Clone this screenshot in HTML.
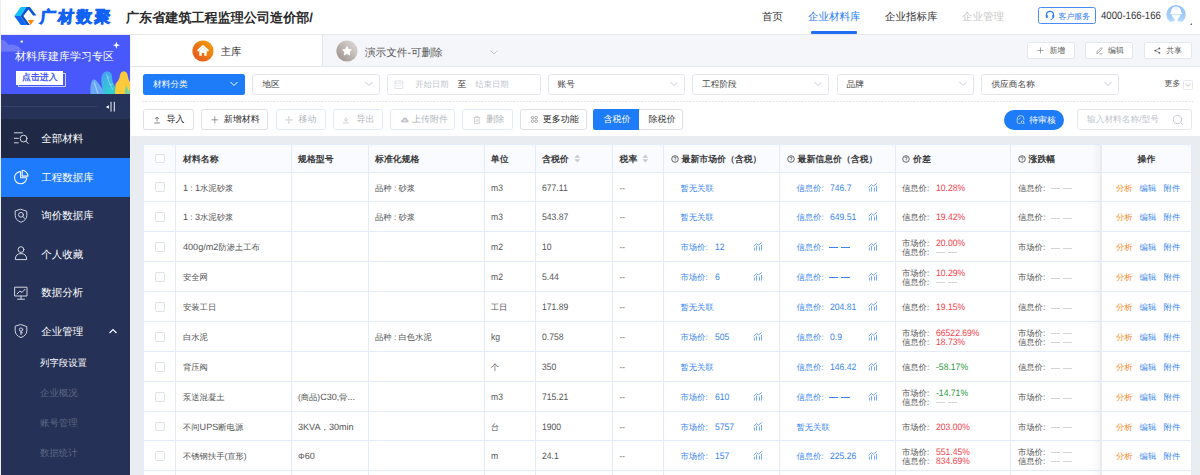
<!DOCTYPE html><html><head><meta charset="utf-8"><style>
*{box-sizing:border-box;margin:0;padding:0}
html,body{width:1200px;height:475px;overflow:hidden;background:#fff;font-family:"Liberation Sans", sans-serif;text-rendering:geometricPrecision;}
.a{position:absolute}
.hdr{left:0;top:0;width:1200px;height:35px;background:#fff;border-bottom:1px solid #e6e8eb}
.side{left:1px;top:35px;width:129px;height:440px;background:#253156}
.edge{left:0;top:0;width:1px;height:475px;background:#eef0f2}
.txt{white-space:nowrap;line-height:1}
</style></head><body><div class="a edge"></div>
<div class="a hdr"></div>
<svg class="a" style="left:0;top:0" width="40" height="34" viewBox="0 0 40 34">
<polygon points="14.26,16.07 20.8,7 26.5,7 20.5,16.07" fill="#13c2f7"/>
<polygon points="26.5,7 29.9,7 36.4,15.5 33,15.5 28.5,9.5 23.35,16.07 20.5,16.07" fill="#0a56d8"/>
<polygon points="14.26,16.07 20.5,16.07 27,24.9 20.8,24.9" fill="#1268f5"/>
<polygon points="20.5,16.07 23.35,16.07 29.9,24.9 27,24.9" fill="#0a4cc8"/>
<polygon points="27.9,20.05 34.1,20.05 30.7,24.9" fill="#ff8a00"/>
</svg>
<div class="a txt" style="left:39.8px;top:9.6px;font-size:15.6px;font-weight:bold;color:#1262f5;transform:skewX(-5deg);letter-spacing:2.6px;-webkit-text-stroke:0.9px #1262f5">广材数聚</div>
<div class="a txt" style="left:126px;top:10.5px;font-size:13.1px;font-weight:bold;color:#2b2b2b">广东省建筑工程监理公司造价部/</div>
<div class="a txt" style="left:762px;top:11.9px;font-size:10.5px;color:#333">首页</div>
<div class="a txt" style="left:808px;top:11.9px;font-size:10.5px;color:#2a7cf6">企业材料库</div>
<div class="a" style="left:811px;top:31px;width:46px;height:3px;background:#1f6ff2;border-radius:1px"></div>
<div class="a txt" style="left:885px;top:11.9px;font-size:10.5px;color:#333">企业指标库</div>
<div class="a txt" style="left:962px;top:11.9px;font-size:10.5px;color:#c8c8c8">企业管理</div>
<div class="a" style="left:1038px;top:7px;width:58px;height:16.5px;border:1px solid #4a8cf6;border-radius:2.5px"></div>
<svg class="a" style="left:1045px;top:10px" width="10" height="11" viewBox="0 0 10 11"><path d="M1.5 6 V4.8 A3.5 3.5 0 0 1 8.5 4.8 V6" fill="none" stroke="#2f7cf6" stroke-width="1.3"/><rect x="0.8" y="5" width="2" height="3" rx="0.8" fill="#2f7cf6"/><rect x="7.2" y="5" width="2" height="3" rx="0.8" fill="#2f7cf6"/><path d="M8.2 8 Q7.5 9.5 5.5 9.5" fill="none" stroke="#2f7cf6" stroke-width="1"/></svg>
<div class="a txt" style="left:1058.5px;top:12.6px;font-size:7.9px;color:#2f7cf6">客户服务</div>
<div class="a txt" style="left:1101px;top:11px;font-size:10.7px;color:#333;transform:scaleX(0.9);transform-origin:0 0">4000-166-166</div>
<svg class="a" style="left:1162px;top:2px" width="34" height="28" viewBox="0 0 34 28">
<defs><linearGradient id="av" x1="0" y1="0" x2="0" y2="1"><stop offset="0" stop-color="#93c2f6"/><stop offset="0.7" stop-color="#a9d0f8"/><stop offset="1" stop-color="#e6f1fd"/></linearGradient></defs>
<circle cx="14.1" cy="12.7" r="9.7" fill="url(#av)"/>
<path d="M8.9 11.2 Q9 4.6 14.1 4.6 Q19.2 4.6 19.3 11.2 Z" fill="#fff"/>
<rect x="8" y="10.7" width="12.2" height="1.3" rx="0.5" fill="#fff"/>
<path d="M13.2 5.2 V7.6 M15 5.2 V7.6" stroke="#c4def9" stroke-width="0.7"/>
<path d="M9.6 12.6 Q10.2 15.6 12.6 17.4 Q12.9 18.6 12.4 19.2 Q9.5 19.6 7.2 20.3 Q10 22.6 14.1 22.6 Q18.2 22.6 21 20.3 Q18.7 19.6 15.8 19.2 Q15.3 18.6 15.6 17.4 Q18 15.6 18.6 12.6 Z" fill="#fff" opacity="0.95"/>
</svg>
<div class="a" style="left:1190px;top:23px;width:0;height:0;border-left:2px solid transparent;border-bottom:2px solid #666"></div>
<div class="a side"></div>
<svg class="a" style="left:1px;top:35px" width="129" height="59" viewBox="0 0 129 59">
<defs><linearGradient id="lf" x1="0" y1="0" x2="0.4" y2="1"><stop offset="0" stop-color="#4c9af7"/><stop offset="1" stop-color="#2fd0cf"/></linearGradient></defs>
<rect width="129" height="59" fill="#4858fb"/>
<path d="M0 4.4 Q5 5 7.2 9.7 Q17 8 21.7 16.4 L0 16.4 Z" fill="#6f79f7"/>
<circle cx="20.8" cy="6.6" r="1.2" fill="#fff"/>
<path d="M115.4 6.5 L116.3 9.3 L119 10.2 L116.3 11.1 L115.4 13.9 L114.5 11.1 L111.8 10.2 L114.5 9.3 Z" fill="#fff"/>
<path d="M89.5 59 C89 52 90 45.5 92.6 44.6 C95.5 44 98 50 104 56.5 L104.5 59 Z" fill="#6aa9f9"/>
<path d="M93.3 47.5 L96.8 58.5" stroke="#e8f2ff" stroke-width="0.6"/>
<path d="M103 59 C101.5 52 99 46 101 40.5 C103 35 109.5 35 110.7 40 C111.7 45 110.5 49 117 54 L118.5 59 Z" fill="url(#lf)"/>
<path d="M105.5 39 L108 47 L112 55 M106 43 L108.5 42 M108.5 49.5 L112 49" stroke="#bfe8f7" stroke-width="0.5" fill="none"/>
<path d="M114 59 L114.5 49 C117 46.5 118.5 44 119 40 C119.8 35.5 125.5 34.5 126.6 40 C127.3 43.5 128 46 129 47 L129 59 Z" fill="#fcc93a"/>
<path d="M124 59 Q123.5 53 125.5 51 Q127.5 54 126.5 59 Z M127 59 Q127.5 55 129 54 L129 59 Z" fill="#66d6a6"/>
</svg>
<div class="a txt" style="left:15px;top:51.8px;font-size:11px;font-weight:500;color:#fff">材料库建库学习专区</div>
<div class="a" style="left:18px;top:72.5px;width:48px;height:14px;border:1px solid #c9cdfb"></div>
<div class="a" style="left:15.5px;top:70.5px;width:47.5px;height:14px;background:#fff"></div>
<div class="a txt" style="left:22px;top:73.3px;font-size:8.9px;font-weight:bold;color:#4a58f6">点击进入</div>
<div class="a" style="left:1px;top:94px;width:129px;height:25px;background:#263258"></div>
<div class="a" style="left:1px;top:106px;width:96px;height:1px;background:#35416a"></div>
<svg class="a" style="left:105px;top:101px" width="12" height="12" viewBox="0 0 12 12"><path d="M0.9 6 L3.9 4.2 V7.8 Z" fill="#fff"/><rect x="5.5" y="0.8" width="1" height="9.8" fill="#eef0f5"/><rect x="8.8" y="0.8" width="1" height="9.8" fill="#eef0f5"/></svg>
<div class="a" style="left:1px;top:119px;width:129px;height:39px;background:#1f2945"></div>
<div class="a" style="left:1px;top:158px;width:129px;height:38.5px;background:#1e7bfc"></div>
<div class="a txt" style="left:41.3px;top:134.0px;font-size:10.5px;color:#fff">全部材料</div>
<div class="a txt" style="left:41.3px;top:172.70000000000002px;font-size:10.5px;color:#fff">工程数据库</div>
<div class="a txt" style="left:41.3px;top:211.4px;font-size:10.5px;color:#fff">询价数据库</div>
<div class="a txt" style="left:41.3px;top:250.20000000000002px;font-size:10.5px;color:#fff">个人收藏</div>
<div class="a txt" style="left:41.3px;top:287.9px;font-size:10.5px;color:#fff">数据分析</div>
<div class="a txt" style="left:41.3px;top:326.7px;font-size:10.5px;color:#fff">企业管理</div>
<svg class="a" style="left:0;top:0" width="40" height="350" viewBox="0 0 40 350" fill="none" stroke="#d3d6de" stroke-width="1" stroke-linecap="round" stroke-linejoin="round">
<path d="M14.3 132.8 H22.3 M14.3 138.3 H18.3 M14.3 142.8 H18.3"/><circle cx="23.6" cy="138.6" r="3.4"/><path d="M26 141.2 L28.2 143.6"/>
<path d="M20.6 171.6 A6.1 6.1 0 1 0 26.7 177.7 H20.6 Z" stroke="#f2f6ff" stroke-width="1.1"/><path d="M22.2 170.3 A6 6 0 0 1 28 176.1 H22.2 Z" stroke="#f2f6ff" stroke-width="1.1"/>
<path d="M21 209.3 L26.8 211.3 V215.5 Q26.8 220 21 222.3 Q15.2 220 15.2 215.5 V211.3 Z"/><circle cx="21" cy="214.8" r="2.4"/><path d="M22.8 216.6 L24.6 218.2"/>
<circle cx="21" cy="249.6" r="2.9"/><path d="M15.3 259.2 Q15.3 253.6 21 253.6 Q26.7 253.6 26.7 259.2 Z"/>
<path d="M15 287.2 H27 V296 H15 Z"/><path d="M21 296 V299 M17.5 299.2 H24.5"/><path d="M17 294 L20 291 L22 292.5 L25 289.3"/>
<path d="M21 324.6 L26.8 326.6 V330.8 Q26.8 335.3 21 337.6 Q15.2 335.3 15.2 330.8 V326.6 Z"/><circle cx="21" cy="329.6" r="1.7"/><path d="M21 331.3 V334.5 M21 332.8 H22.3"/>
</svg>
<svg class="a" style="left:108px;top:327px" width="10" height="8" viewBox="0 0 10 8"><path d="M1.5 6 L5 2.5 L8.5 6" fill="none" stroke="#fff" stroke-width="1.1"/></svg>
<div class="a txt" style="left:40px;top:358px;font-size:9.4px;color:#fff">列字段设置</div>
<div class="a txt" style="left:40px;top:388px;font-size:9.4px;color:#5d6784">企业概况</div>
<div class="a txt" style="left:40px;top:418px;font-size:9.4px;color:#5d6784">账号管理</div>
<div class="a txt" style="left:40px;top:448px;font-size:9.4px;color:#5d6784">数据统计</div>
<div class="a" style="left:130px;top:35px;width:1070px;height:32px;background:#f4f6f9;border-bottom:1px solid #e3e6ea"></div>
<div class="a" style="left:130px;top:35px;width:192.5px;height:31px;background:#fff;border-right:1px solid #e3e6ea"></div>
<svg class="a" style="left:192px;top:40px" width="22" height="22" viewBox="0 0 22 22">
<defs><linearGradient id="hg" x1="1" y1="0" x2="0" y2="1"><stop offset="0" stop-color="#f5a208"/><stop offset="1" stop-color="#e44f20"/></linearGradient></defs>
<circle cx="11" cy="11" r="10.6" fill="url(#hg)"/>
<path d="M5.5 11 L11 6 L16.5 11" fill="none" stroke="#fff" stroke-width="1.8" stroke-linejoin="round"/>
<path d="M7.3 10.5 V15.8 H9.8 V13 H12.2 V15.8 H14.7 V10.5 L11 7.3 Z" fill="#fff"/></svg>
<div class="a txt" style="left:220.8px;top:47.8px;font-size:10.3px;color:#333">主库</div>
<svg class="a" style="left:336px;top:40px" width="22" height="22" viewBox="0 0 22 22">
<defs><linearGradient id="sg" x1="0.9" y1="0.1" x2="0.1" y2="0.9"><stop offset="0" stop-color="#dcd7d4"/><stop offset="1" stop-color="#a0958f"/></linearGradient></defs>
<circle cx="11" cy="11" r="10.6" fill="url(#sg)"/>
<path d="M11 6.6 L12.4 9.4 L15.4 9.8 L13.2 11.9 L13.8 15 L11 13.5 L8.2 15 L8.8 11.9 L6.6 9.8 L9.6 9.4 Z" fill="#fff" stroke="#fff" stroke-width="0.9" stroke-linejoin="round"/></svg>
<div class="a txt" style="left:365px;top:47.8px;font-size:10.6px;color:#555">演示文件-可删除</div>
<svg class="a" style="left:489px;top:49px" width="10" height="7" viewBox="0 0 10 7"><path d="M1.5 1.5 L5 5 L8.5 1.5" fill="none" stroke="#c0c4cc" stroke-width="1"/></svg>
<div class="a" style="left:1026.75px;top:41.5px;width:48.5px;height:17.7px;background:#fff;border:1px solid #e4e7ed;border-radius:2px"></div>
<div class="a txt" style="left:1049.45px;top:47px;font-size:7.9px;color:#555">新增</div>
<div class="a" style="left:1085.4px;top:41.5px;width:48px;height:17.7px;background:#fff;border:1px solid #e4e7ed;border-radius:2px"></div>
<div class="a txt" style="left:1108.1000000000001px;top:47px;font-size:7.9px;color:#555">编辑</div>
<div class="a" style="left:1143.5px;top:41.5px;width:48.3px;height:17.7px;background:#fff;border:1px solid #e4e7ed;border-radius:2px"></div>
<div class="a txt" style="left:1166.2px;top:47px;font-size:7.9px;color:#555">共享</div>
<svg class="a" style="left:1036px;top:46px" width="9" height="9" viewBox="0 0 9 9"><path d="M4.5 1.5 V7.5 M1.5 4.5 H7.5" stroke="#777" stroke-width="0.65"/></svg>
<svg class="a" style="left:1095px;top:46px" width="9" height="9" viewBox="0 0 9 9"><path d="M1.8 7.6 L2.1 5.6 L5.6 2 Q6.3 1.4 6.9 2 Q7.4 2.6 6.8 3.2 L3.3 6.8 Z M4.3 7.8 H7.6" fill="none" stroke="#777" stroke-width="0.6"/></svg>
<svg class="a" style="left:1153px;top:46px" width="9" height="9" viewBox="0 0 9 9"><circle cx="2.2" cy="4.6" r="0.9" fill="#555"/><circle cx="6.4" cy="2.4" r="0.85" fill="#555"/><circle cx="6.4" cy="6.8" r="0.85" fill="#555"/><path d="M2.2 4.6 L6.4 2.4 M2.2 4.6 L6.4 6.8" stroke="#555" stroke-width="0.6"/></svg>
<div class="a" style="left:143px;top:74px;width:102px;height:20.5px;background:#1f7cf8;border-radius:2.5px"></div>
<div class="a txt" style="left:153px;top:79.8px;font-size:8.7px;color:#fff">材料分类</div>
<svg class="a" style="left:229px;top:80px" width="10" height="8" viewBox="0 0 10 8"><path d="M1.5 2 L5 5.5 L8.5 2" fill="none" stroke="#fff" stroke-width="1"/></svg>
<div class="a" style="left:252.3px;top:74px;width:127.69999999999999px;height:20.5px;background:#fff;border:1px solid #e4e7ed;border-radius:2.5px"></div>
<div class="a txt" style="left:262.3px;top:79.8px;font-size:8.7px;color:#444">地区</div>
<svg class="a" style="left:364px;top:80px" width="10" height="8" viewBox="0 0 10 8"><path d="M1.5 2 L5 5.5 L8.5 2" fill="none" stroke="#c0c4cc" stroke-width="0.9"/></svg>
<div class="a" style="left:386.7px;top:74px;width:154.09999999999997px;height:20.5px;background:#fff;border:1px solid #e4e7ed;border-radius:2.5px"></div>
<div class="a" style="left:547.5px;top:74px;width:137.79999999999995px;height:20.5px;background:#fff;border:1px solid #e4e7ed;border-radius:2.5px"></div>
<div class="a txt" style="left:557.5px;top:79.8px;font-size:8.7px;color:#444">账号</div>
<svg class="a" style="left:669.3px;top:80px" width="10" height="8" viewBox="0 0 10 8"><path d="M1.5 2 L5 5.5 L8.5 2" fill="none" stroke="#c0c4cc" stroke-width="0.9"/></svg>
<div class="a" style="left:692px;top:74px;width:137.29999999999995px;height:20.5px;background:#fff;border:1px solid #e4e7ed;border-radius:2.5px"></div>
<div class="a txt" style="left:702px;top:79.8px;font-size:8.7px;color:#444">工程阶段</div>
<svg class="a" style="left:813.3px;top:80px" width="10" height="8" viewBox="0 0 10 8"><path d="M1.5 2 L5 5.5 L8.5 2" fill="none" stroke="#c0c4cc" stroke-width="0.9"/></svg>
<div class="a" style="left:836.5px;top:74px;width:137.5px;height:20.5px;background:#fff;border:1px solid #e4e7ed;border-radius:2.5px"></div>
<div class="a txt" style="left:846.5px;top:79.8px;font-size:8.7px;color:#444">品牌</div>
<svg class="a" style="left:958px;top:80px" width="10" height="8" viewBox="0 0 10 8"><path d="M1.5 2 L5 5.5 L8.5 2" fill="none" stroke="#c0c4cc" stroke-width="0.9"/></svg>
<div class="a" style="left:981.4px;top:74px;width:137.19999999999993px;height:20.5px;background:#fff;border:1px solid #e4e7ed;border-radius:2.5px"></div>
<div class="a txt" style="left:991.4px;top:79.8px;font-size:8.7px;color:#444">供应商名称</div>
<svg class="a" style="left:1102.6px;top:80px" width="10" height="8" viewBox="0 0 10 8"><path d="M1.5 2 L5 5.5 L8.5 2" fill="none" stroke="#c0c4cc" stroke-width="0.9"/></svg>
<svg class="a" style="left:393.5px;top:79.5px" width="10" height="10" viewBox="0 0 10 10" fill="none" stroke="#cfd2d8" stroke-width="0.65"><rect x="1" y="0.9" width="7.8" height="7.6" rx="0.4"/><path d="M1 3.1 H8.8"/><path d="M2.8 5.6 H3.6 M4.6 5.6 H5.4 M6.3 5.6 H7.1" stroke-width="0.8"/></svg>
<div class="a txt" style="left:415.3px;top:80.1px;font-size:8.3px;color:#c0c4cc">开始日期</div>
<div class="a txt" style="left:457.5px;top:79.8px;font-size:8.7px;color:#333">至</div>
<div class="a txt" style="left:475.3px;top:80.1px;font-size:8.3px;color:#c0c4cc">结束日期</div>
<div class="a txt" style="left:1164.6px;top:79.6px;font-size:7.9px;color:#555">更多</div>
<svg class="a" style="left:1183px;top:79.5px" width="10" height="10" viewBox="0 0 10 10"><rect x="0.5" y="0.5" width="9" height="9" rx="1" fill="none" stroke="#e3e6ec" stroke-width="0.9"/><path d="M2.3 3.8 L5 6.2 L7.7 3.8" fill="none" stroke="#b9a89a" stroke-width="0.7"/></svg>
<div class="a" style="left:142px;top:101px;width:1051px;height:1px;background:repeating-linear-gradient(to right,#e3e5e9 0,#e3e5e9 2px,transparent 2px,transparent 3.2px)"></div>
<div class="a" style="left:142.5px;top:108.5px;width:51.19999999999999px;height:21.5px;background:#fff;border:1px solid #dcdfe6;border-radius:2.5px"></div>
<div class="a txt" style="left:166.5px;top:115.2px;font-size:9px;color:#2a2a2a;">导入</div>
<div class="a" style="left:200.6px;top:108.5px;width:67.70000000000002px;height:21.5px;background:#fff;border:1px solid #dcdfe6;border-radius:2.5px"></div>
<div class="a txt" style="left:223.8px;top:115.2px;font-size:9px;color:#2a2a2a;">新增材料</div>
<div class="a" style="left:275.5px;top:108.5px;width:50.69999999999999px;height:21.5px;background:#fff;border:1px solid #e3ebfa;border-radius:2.5px"></div>
<div class="a txt" style="left:298.5px;top:115.2px;font-size:9px;color:#b3b6bd;">移动</div>
<div class="a" style="left:332.9px;top:108.5px;width:50.60000000000002px;height:21.5px;background:#fff;border:1px solid #e3ebfa;border-radius:2.5px"></div>
<div class="a txt" style="left:356.4px;top:115.2px;font-size:9px;color:#b3b6bd;">导出</div>
<div class="a" style="left:390.2px;top:108.5px;width:65.30000000000001px;height:21.5px;background:#fff;border:1px solid #e3ebfa;border-radius:2.5px"></div>
<div class="a txt" style="left:412px;top:115.2px;font-size:9px;color:#b3b6bd;">上传附件</div>
<div class="a" style="left:462px;top:108.5px;width:50.799999999999955px;height:21.5px;background:#fff;border:1px solid #e3ebfa;border-radius:2.5px"></div>
<div class="a txt" style="left:486.2px;top:115.2px;font-size:9px;color:#b3b6bd;">删除</div>
<div class="a" style="left:520px;top:108.5px;width:66.70000000000005px;height:21.5px;background:#fff;border:1px solid #dcdfe6;border-radius:2.5px"></div>
<div class="a txt" style="left:542.8px;top:115.2px;font-size:9px;color:#2a2a2a;">更多功能</div>
<svg class="a" style="left:152px;top:114.5px" width="10" height="10" viewBox="0 0 10 10" fill="none" stroke="#666" stroke-width="0.8"><path d="M5 2.2 V6.5 M3 4 L5 2 L7 4 M2.2 8 H7.8"/></svg>
<svg class="a" style="left:210px;top:114.5px" width="10" height="10" viewBox="0 0 10 10" fill="none" stroke="#777" stroke-width="0.75"><path d="M4.8 1.5 V8.2 M1.4 4.8 H8.2"/></svg>
<svg class="a" style="left:284px;top:114.5px" width="10" height="10" viewBox="0 0 10 10" fill="none" stroke="#c0c3c9" stroke-width="0.7"><path d="M5 1.5 V8.3 M1.6 4.9 H8.4 M4.2 2.3 L5 1.5 L5.8 2.3 M4.2 7.5 L5 8.3 L5.8 7.5 M2.4 4.1 L1.6 4.9 L2.4 5.7 M7.6 4.1 L8.4 4.9 L7.6 5.7"/></svg>
<svg class="a" style="left:341px;top:114.5px" width="10" height="10" viewBox="0 0 10 10" fill="none" stroke="#c0c3c9" stroke-width="0.75"><path d="M5 2 V6.3 M3 4.4 L5 6.3 L7 4.4 M2.2 8 H7.8"/></svg>
<svg class="a" style="left:400px;top:115px" width="10" height="10" viewBox="0 0 10 10"><path d="M2.8 7.6 Q0.8 7.6 1 5.9 Q1.2 4.6 2.6 4.7 Q3 2.4 5 2.5 Q7.2 2.6 7.3 4.6 Q8.7 4.8 8.6 6.2 Q8.4 7.6 7.2 7.6 Z" fill="#c0c3c9"/><path d="M4.8 7.2 V4.8 M3.9 5.6 L4.8 4.7 L5.7 5.6" stroke="#fff" stroke-width="0.6" fill="none"/></svg>
<svg class="a" style="left:472px;top:114.5px" width="10" height="10" viewBox="0 0 10 10" fill="none" stroke="#c0c3c9" stroke-width="0.7"><path d="M1.6 2.6 H8.2 M3.8 2.6 V1.5 H6 V2.6 M2.5 2.6 V8.6 H7.3 V2.6 M4.1 4.3 V7 M5.7 4.3 V7"/></svg>
<svg class="a" style="left:529.5px;top:115px" width="9" height="9" viewBox="0 0 9 9" fill="none" stroke="#777" stroke-width="0.6"><circle cx="2.6" cy="2.6" r="1.3"/><circle cx="6.2" cy="2.6" r="1.3"/><circle cx="2.6" cy="6.2" r="1.3"/><circle cx="6.2" cy="6.2" r="1.3"/></svg>
<div class="a" style="left:593.3px;top:108.5px;width:90.2px;height:21.5px;background:#fff;border:1px solid #dcdfe6;border-radius:2.5px"></div>
<div class="a" style="left:593.3px;top:108.5px;width:45.4px;height:21.5px;background:#1f7cf8;border-radius:2.5px 0 0 2.5px"></div>
<div class="a txt" style="left:603.5px;top:115.2px;font-size:9px;color:#fff">含税价</div>
<div class="a txt" style="left:648.5px;top:115.2px;font-size:9px;color:#333">除税价</div>
<div class="a" style="left:1004px;top:109.5px;width:60px;height:20px;background:#1f7cf8;border-radius:10px"></div>
<svg class="a" style="left:1016px;top:115px" width="10" height="10" viewBox="0 0 10 10" fill="none" stroke="#d6e4fe" stroke-width="0.75"><path d="M4.5 8.4 H2.6 Q1.2 8.4 1.2 7 V4 Q1.2 0.6 4.6 0.6 Q8 0.6 8 4 V5"/><path d="M2.4 4.4 L4.6 3.2"/><circle cx="6.6" cy="7.1" r="1.3"/><path d="M7.6 8.1 L8.6 9.1"/></svg>
<div class="a txt" style="left:1029.3px;top:115.6px;font-size:8.8px;font-weight:500;color:#fff">待审核</div>
<div class="a" style="left:1076.6px;top:109px;width:115.5px;height:20.5px;background:#fff;border:1px solid #e4e7ed;border-radius:2.5px"></div>
<div class="a txt" style="left:1087px;top:115.3px;font-size:8.7px;color:#c0c4cc">输入材料名称/型号</div>
<svg class="a" style="left:1172px;top:114px" width="12" height="12" viewBox="0 0 12 12" fill="none" stroke="#c0c4cc" stroke-width="0.9"><circle cx="5.5" cy="5.5" r="4.2"/><path d="M8.5 8.5 L10.8 10.8"/></svg>
<div class="a" style="left:130px;top:136px;width:1070px;height:339px;background:#e9ecf0"></div>
<div class="a" style="left:143px;top:144px;width:1049.5px;height:331px;background:#fff"></div>
<div class="a" style="left:143px;top:144px;width:1049.5px;height:27.80000000000001px;background:#f9fbff"></div>
<div class="a" style="left:143px;top:144px;width:1049.5px;height:1px;background:#e4ecfb"></div>
<div class="a" style="left:143px;top:172px;width:1049.5px;height:1px;background:#e4ecfb"></div>
<div class="a" style="left:143px;top:201px;width:1049.5px;height:1px;background:#e4ecfb"></div>
<div class="a" style="left:143px;top:231px;width:1049.5px;height:1px;background:#e4ecfb"></div>
<div class="a" style="left:143px;top:261px;width:1049.5px;height:1px;background:#e4ecfb"></div>
<div class="a" style="left:143px;top:291px;width:1049.5px;height:1px;background:#e4ecfb"></div>
<div class="a" style="left:143px;top:321px;width:1049.5px;height:1px;background:#e4ecfb"></div>
<div class="a" style="left:143px;top:351px;width:1049.5px;height:1px;background:#e4ecfb"></div>
<div class="a" style="left:143px;top:381px;width:1049.5px;height:1px;background:#e4ecfb"></div>
<div class="a" style="left:143px;top:411px;width:1049.5px;height:1px;background:#e4ecfb"></div>
<div class="a" style="left:143px;top:440px;width:1049.5px;height:1px;background:#e4ecfb"></div>
<div class="a" style="left:143px;top:470px;width:1049.5px;height:1px;background:#e4ecfb"></div>
<div class="a" style="left:142.5px;top:144px;width:1px;height:331px;background:#e4ecfb"></div>
<div class="a" style="left:174.8px;top:144px;width:1px;height:331px;background:#e4ecfb"></div>
<div class="a" style="left:291.25px;top:144px;width:1px;height:331px;background:#e4ecfb"></div>
<div class="a" style="left:368.25px;top:144px;width:1px;height:331px;background:#e4ecfb"></div>
<div class="a" style="left:484.0px;top:144px;width:1px;height:331px;background:#e4ecfb"></div>
<div class="a" style="left:535.0px;top:144px;width:1px;height:331px;background:#e4ecfb"></div>
<div class="a" style="left:612.0px;top:144px;width:1px;height:331px;background:#e4ecfb"></div>
<div class="a" style="left:663.25px;top:144px;width:1px;height:331px;background:#e4ecfb"></div>
<div class="a" style="left:779.0px;top:144px;width:1px;height:331px;background:#e4ecfb"></div>
<div class="a" style="left:894.7px;top:144px;width:1px;height:331px;background:#e4ecfb"></div>
<div class="a" style="left:1010.2px;top:144px;width:1px;height:331px;background:#e4ecfb"></div>
<div class="a" style="left:1191.0px;top:144px;width:1px;height:331px;background:#e4ecfb"></div>
<div class="a" style="left:1092.3px;top:144px;width:8px;height:331px;background:linear-gradient(to right,rgba(0,0,0,0),rgba(0,0,0,0.035))"></div>
<div class="a" style="left:1100.0px;top:144.5px;width:1.6px;height:331px;background:#eaebee"></div>
<div class="a" style="left:155px;top:153.6px;width:9.7px;height:9.7px;border:1px solid #dfe2e7;border-radius:2px;background:#fff"></div>
<div class="a txt" style="left:183px;top:154.75px;font-size:8.9px;color:#3a3a3a;font-weight:bold;">材料名称</div>
<div class="a txt" style="left:298px;top:154.75px;font-size:8.9px;color:#3a3a3a;font-weight:bold;">规格型号</div>
<div class="a txt" style="left:375px;top:154.75px;font-size:8.9px;color:#3a3a3a;font-weight:bold;">标准化规格</div>
<div class="a txt" style="left:490.8px;top:154.75px;font-size:8.9px;color:#3a3a3a;font-weight:bold;">单位</div>
<div class="a txt" style="left:542px;top:154.75px;font-size:8.9px;color:#3a3a3a;font-weight:bold;">含税价</div>
<svg class="a" style="left:573.8px;top:154.10000000000002px" width="7" height="9" viewBox="0 0 7 9"><path d="M0.2 3.7 L3.3 0.4 L6.4 3.7 Z M0.2 5.2 L3.3 8.5 L6.4 5.2 Z" fill="#c8cbd1"/></svg>
<div class="a txt" style="left:619.5px;top:154.75px;font-size:8.9px;color:#3a3a3a;font-weight:bold;">税率</div>
<svg class="a" style="left:642px;top:154.10000000000002px" width="7" height="9" viewBox="0 0 7 9"><path d="M0.2 3.7 L3.3 0.4 L6.4 3.7 Z M0.2 5.2 L3.3 8.5 L6.4 5.2 Z" fill="#c8cbd1"/></svg>
<svg class="a" style="left:670.5px;top:155.3px" width="8" height="8" viewBox="0 0 8 8"><circle cx="4" cy="4" r="3.3" fill="none" stroke="#444" stroke-width="0.8"/><path d="M2.9 3.1 Q2.9 2 4 2 Q5.1 2 5.1 3 Q5.1 3.7 4.1 4.2 V4.9" fill="none" stroke="#444" stroke-width="0.7"/><circle cx="4.05" cy="5.9" r="0.45" fill="#444"/></svg>
<div class="a txt" style="left:681.5px;top:154.75px;font-size:8.9px;color:#3a3a3a;font-weight:bold;">最新市场价（含税）</div>
<svg class="a" style="left:786.5px;top:155.3px" width="8" height="8" viewBox="0 0 8 8"><circle cx="4" cy="4" r="3.3" fill="none" stroke="#444" stroke-width="0.8"/><path d="M2.9 3.1 Q2.9 2 4 2 Q5.1 2 5.1 3 Q5.1 3.7 4.1 4.2 V4.9" fill="none" stroke="#444" stroke-width="0.7"/><circle cx="4.05" cy="5.9" r="0.45" fill="#444"/></svg>
<div class="a txt" style="left:797.5px;top:154.75px;font-size:8.9px;color:#3a3a3a;font-weight:bold;">最新信息价（含税）</div>
<svg class="a" style="left:902px;top:155.3px" width="8" height="8" viewBox="0 0 8 8"><circle cx="4" cy="4" r="3.3" fill="none" stroke="#444" stroke-width="0.8"/><path d="M2.9 3.1 Q2.9 2 4 2 Q5.1 2 5.1 3 Q5.1 3.7 4.1 4.2 V4.9" fill="none" stroke="#444" stroke-width="0.7"/><circle cx="4.05" cy="5.9" r="0.45" fill="#444"/></svg>
<div class="a txt" style="left:913px;top:154.75px;font-size:8.9px;color:#3a3a3a;font-weight:bold;">价差</div>
<svg class="a" style="left:1017.5px;top:155.3px" width="8" height="8" viewBox="0 0 8 8"><circle cx="4" cy="4" r="3.3" fill="none" stroke="#444" stroke-width="0.8"/><path d="M2.9 3.1 Q2.9 2 4 2 Q5.1 2 5.1 3 Q5.1 3.7 4.1 4.2 V4.9" fill="none" stroke="#444" stroke-width="0.7"/><circle cx="4.05" cy="5.9" r="0.45" fill="#444"/></svg>
<div class="a txt" style="left:1028.5px;top:154.75px;font-size:8.9px;color:#3a3a3a;font-weight:bold;">涨跌幅</div>
<div class="a txt" style="left:1137.5px;top:154.75px;font-size:8.9px;color:#3a3a3a;font-weight:bold;">操作</div>
<div class="a" style="left:155px;top:182.2px;width:9.7px;height:9.7px;border:1px solid #dfe2e7;border-radius:2px;background:#fff"></div>
<div class="a txt" style="left:183px;top:183.65px;font-size:8.3px;color:#555;"><span style="font-size:9.1px;line-height:0">1</span> : <span style="font-size:9.1px;line-height:0">1</span>水泥砂浆</div>
<div class="a txt" style="left:375px;top:183.65px;font-size:8.3px;color:#555;">品种 : 砂浆</div>
<div class="a txt" style="left:490.8px;top:183.60px;font-size:9.3px;color:#555;transform:scaleX(0.925);transform-origin:0 0;">m3</div>
<div class="a txt" style="left:542px;top:183.60px;font-size:9.3px;color:#555;transform:scaleX(0.925);transform-origin:0 0;">677.11</div>
<div class="a txt" style="left:619.5px;top:183.65px;font-size:8.3px;color:#555;">--</div>
<div class="a txt" style="left:680.5px;top:183.65px;font-size:8.3px;color:#3a86f0;">暂无关联</div>
<div class="a txt" style="left:796.5px;top:183.65px;font-size:8.3px;color:#3a86f0;">信息价:</div>
<div class="a txt" style="left:829.5px;top:183.60px;font-size:9.3px;color:#3a86f0;transform:scaleX(0.925);transform-origin:0 0;">746.7</div>
<svg class="a" style="left:868px;top:182.5px" width="10" height="9" viewBox="0 0 10 9" fill="none" stroke="#5c9cf3" stroke-width="0.85" stroke-linecap="round" stroke-linejoin="round"><path d="M1.4 5.9 V8.2 M3.5 4.1 V8.2 M6.5 5 V8.2 M8.5 3.2 V8.2"/><path d="M0.9 4.1 L3.5 1.6 L5.4 3.1 L8.5 0.7"/></svg>
<div class="a txt" style="left:902px;top:183.65px;font-size:8.3px;color:#555;">信息价:</div>
<div class="a txt" style="left:935.6px;top:183.60px;font-size:9.3px;color:#f5424a;transform:scaleX(0.925);transform-origin:0 0;">10.28%</div>
<div class="a txt" style="left:1018px;top:183.65px;font-size:8.3px;color:#555;">信息价:</div>
<div class="a" style="left:1051px;top:188.0px;width:9px;height:0.8px;background:#d4d4d4"></div>
<div class="a" style="left:1062.5px;top:188.0px;width:9px;height:0.8px;background:#d4d4d4"></div>
<div class="a txt" style="left:1116px;top:183.65px;font-size:8.3px;color:#f98a25;">分析</div>
<div class="a txt" style="left:1139.6px;top:183.65px;font-size:8.3px;color:#3a86f0;">编辑</div>
<div class="a txt" style="left:1163.6px;top:183.65px;font-size:8.3px;color:#3a86f0;">附件</div>
<div class="a" style="left:155px;top:211.89999999999998px;width:9.7px;height:9.7px;border:1px solid #dfe2e7;border-radius:2px;background:#fff"></div>
<div class="a txt" style="left:183px;top:213.35px;font-size:8.3px;color:#555;"><span style="font-size:9.1px;line-height:0">1</span> : <span style="font-size:9.1px;line-height:0">3</span>水泥砂浆</div>
<div class="a txt" style="left:375px;top:213.35px;font-size:8.3px;color:#555;">品种 : 砂浆</div>
<div class="a txt" style="left:490.8px;top:213.30px;font-size:9.3px;color:#555;transform:scaleX(0.925);transform-origin:0 0;">m3</div>
<div class="a txt" style="left:542px;top:213.30px;font-size:9.3px;color:#555;transform:scaleX(0.925);transform-origin:0 0;">543.87</div>
<div class="a txt" style="left:619.5px;top:213.35px;font-size:8.3px;color:#555;">--</div>
<div class="a txt" style="left:680.5px;top:213.35px;font-size:8.3px;color:#3a86f0;">暂无关联</div>
<div class="a txt" style="left:796.5px;top:213.35px;font-size:8.3px;color:#3a86f0;">信息价:</div>
<div class="a txt" style="left:829.5px;top:213.30px;font-size:9.3px;color:#3a86f0;transform:scaleX(0.925);transform-origin:0 0;">649.51</div>
<svg class="a" style="left:868px;top:212.2px" width="10" height="9" viewBox="0 0 10 9" fill="none" stroke="#5c9cf3" stroke-width="0.85" stroke-linecap="round" stroke-linejoin="round"><path d="M1.4 5.9 V8.2 M3.5 4.1 V8.2 M6.5 5 V8.2 M8.5 3.2 V8.2"/><path d="M0.9 4.1 L3.5 1.6 L5.4 3.1 L8.5 0.7"/></svg>
<div class="a txt" style="left:902px;top:213.35px;font-size:8.3px;color:#555;">信息价:</div>
<div class="a txt" style="left:935.6px;top:213.30px;font-size:9.3px;color:#f5424a;transform:scaleX(0.925);transform-origin:0 0;">19.42%</div>
<div class="a txt" style="left:1018px;top:213.35px;font-size:8.3px;color:#555;">信息价:</div>
<div class="a" style="left:1051px;top:217.7px;width:9px;height:0.8px;background:#d4d4d4"></div>
<div class="a" style="left:1062.5px;top:217.7px;width:9px;height:0.8px;background:#d4d4d4"></div>
<div class="a txt" style="left:1116px;top:213.35px;font-size:8.3px;color:#f98a25;">分析</div>
<div class="a txt" style="left:1139.6px;top:213.35px;font-size:8.3px;color:#3a86f0;">编辑</div>
<div class="a txt" style="left:1163.6px;top:213.35px;font-size:8.3px;color:#3a86f0;">附件</div>
<div class="a" style="left:155px;top:241.89999999999998px;width:9.7px;height:9.7px;border:1px solid #dfe2e7;border-radius:2px;background:#fff"></div>
<div class="a txt" style="left:183px;top:243.35px;font-size:8.3px;color:#555;"><span style="font-size:9.1px;line-height:0">400g/m2</span>防渗土工布</div>
<div class="a txt" style="left:490.8px;top:243.30px;font-size:9.3px;color:#555;transform:scaleX(0.925);transform-origin:0 0;">m2</div>
<div class="a txt" style="left:542px;top:243.30px;font-size:9.3px;color:#555;transform:scaleX(0.925);transform-origin:0 0;">10</div>
<div class="a txt" style="left:619.5px;top:243.35px;font-size:8.3px;color:#555;">--</div>
<div class="a txt" style="left:680.5px;top:243.35px;font-size:8.3px;color:#3a86f0;">市场价:</div>
<div class="a txt" style="left:714.5px;top:243.30px;font-size:9.3px;color:#3a86f0;transform:scaleX(0.925);transform-origin:0 0;">12</div>
<svg class="a" style="left:752.5px;top:242.2px" width="10" height="9" viewBox="0 0 10 9" fill="none" stroke="#5c9cf3" stroke-width="0.85" stroke-linecap="round" stroke-linejoin="round"><path d="M1.4 5.9 V8.2 M3.5 4.1 V8.2 M6.5 5 V8.2 M8.5 3.2 V8.2"/><path d="M0.9 4.1 L3.5 1.6 L5.4 3.1 L8.5 0.7"/></svg>
<div class="a txt" style="left:796.5px;top:243.35px;font-size:8.3px;color:#3a86f0;">信息价:</div>
<div class="a" style="left:829px;top:247.2px;width:9px;height:0.8px;background:#3a86f0"></div>
<div class="a" style="left:841px;top:247.2px;width:9px;height:0.8px;background:#3a86f0"></div>
<svg class="a" style="left:868px;top:242.2px" width="10" height="9" viewBox="0 0 10 9" fill="none" stroke="#5c9cf3" stroke-width="0.85" stroke-linecap="round" stroke-linejoin="round"><path d="M1.4 5.9 V8.2 M3.5 4.1 V8.2 M6.5 5 V8.2 M8.5 3.2 V8.2"/><path d="M0.9 4.1 L3.5 1.6 L5.4 3.1 L8.5 0.7"/></svg>
<div class="a txt" style="left:902px;top:239.05px;font-size:8.3px;color:#555;">市场价:</div>
<div class="a txt" style="left:935.6px;top:239.00px;font-size:9.3px;color:#f5424a;transform:scaleX(0.925);transform-origin:0 0;">20.00%</div>
<div class="a txt" style="left:902px;top:247.85px;font-size:8.3px;color:#555;">信息价:</div>
<div class="a" style="left:935.6px;top:252.2px;width:9px;height:0.8px;background:#d4d4d4"></div>
<div class="a" style="left:947.5px;top:252.2px;width:9px;height:0.8px;background:#d4d4d4"></div>
<div class="a txt" style="left:1018px;top:243.35px;font-size:8.3px;color:#555;">市场价:</div>
<div class="a" style="left:1051px;top:247.7px;width:9px;height:0.8px;background:#d4d4d4"></div>
<div class="a" style="left:1062.5px;top:247.7px;width:9px;height:0.8px;background:#d4d4d4"></div>
<div class="a txt" style="left:1116px;top:243.35px;font-size:8.3px;color:#f98a25;">分析</div>
<div class="a txt" style="left:1139.6px;top:243.35px;font-size:8.3px;color:#3a86f0;">编辑</div>
<div class="a txt" style="left:1163.6px;top:243.35px;font-size:8.3px;color:#3a86f0;">附件</div>
<div class="a" style="left:155px;top:271.9px;width:9.7px;height:9.7px;border:1px solid #dfe2e7;border-radius:2px;background:#fff"></div>
<div class="a txt" style="left:183px;top:273.35px;font-size:8.3px;color:#555;">安全网</div>
<div class="a txt" style="left:490.8px;top:273.30px;font-size:9.3px;color:#555;transform:scaleX(0.925);transform-origin:0 0;">m2</div>
<div class="a txt" style="left:542px;top:273.30px;font-size:9.3px;color:#555;transform:scaleX(0.925);transform-origin:0 0;">5.44</div>
<div class="a txt" style="left:619.5px;top:273.35px;font-size:8.3px;color:#555;">--</div>
<div class="a txt" style="left:680.5px;top:273.35px;font-size:8.3px;color:#3a86f0;">市场价:</div>
<div class="a txt" style="left:714.5px;top:273.30px;font-size:9.3px;color:#3a86f0;transform:scaleX(0.925);transform-origin:0 0;">6</div>
<svg class="a" style="left:752.5px;top:272.2px" width="10" height="9" viewBox="0 0 10 9" fill="none" stroke="#5c9cf3" stroke-width="0.85" stroke-linecap="round" stroke-linejoin="round"><path d="M1.4 5.9 V8.2 M3.5 4.1 V8.2 M6.5 5 V8.2 M8.5 3.2 V8.2"/><path d="M0.9 4.1 L3.5 1.6 L5.4 3.1 L8.5 0.7"/></svg>
<div class="a txt" style="left:796.5px;top:273.35px;font-size:8.3px;color:#3a86f0;">信息价:</div>
<div class="a" style="left:829px;top:277.2px;width:9px;height:0.8px;background:#3a86f0"></div>
<div class="a" style="left:841px;top:277.2px;width:9px;height:0.8px;background:#3a86f0"></div>
<svg class="a" style="left:868px;top:272.2px" width="10" height="9" viewBox="0 0 10 9" fill="none" stroke="#5c9cf3" stroke-width="0.85" stroke-linecap="round" stroke-linejoin="round"><path d="M1.4 5.9 V8.2 M3.5 4.1 V8.2 M6.5 5 V8.2 M8.5 3.2 V8.2"/><path d="M0.9 4.1 L3.5 1.6 L5.4 3.1 L8.5 0.7"/></svg>
<div class="a txt" style="left:902px;top:269.05px;font-size:8.3px;color:#555;">市场价:</div>
<div class="a txt" style="left:935.6px;top:269.00px;font-size:9.3px;color:#f5424a;transform:scaleX(0.925);transform-origin:0 0;">10.29%</div>
<div class="a txt" style="left:902px;top:277.85px;font-size:8.3px;color:#555;">信息价:</div>
<div class="a" style="left:935.6px;top:282.2px;width:9px;height:0.8px;background:#d4d4d4"></div>
<div class="a" style="left:947.5px;top:282.2px;width:9px;height:0.8px;background:#d4d4d4"></div>
<div class="a txt" style="left:1018px;top:273.35px;font-size:8.3px;color:#555;">市场价:</div>
<div class="a" style="left:1051px;top:277.7px;width:9px;height:0.8px;background:#d4d4d4"></div>
<div class="a" style="left:1062.5px;top:277.7px;width:9px;height:0.8px;background:#d4d4d4"></div>
<div class="a txt" style="left:1116px;top:273.35px;font-size:8.3px;color:#f98a25;">分析</div>
<div class="a txt" style="left:1139.6px;top:273.35px;font-size:8.3px;color:#3a86f0;">编辑</div>
<div class="a txt" style="left:1163.6px;top:273.35px;font-size:8.3px;color:#3a86f0;">附件</div>
<div class="a" style="left:155px;top:301.9px;width:9.7px;height:9.7px;border:1px solid #dfe2e7;border-radius:2px;background:#fff"></div>
<div class="a txt" style="left:183px;top:303.35px;font-size:8.3px;color:#555;">安装工日</div>
<div class="a txt" style="left:490.8px;top:303.35px;font-size:8.3px;color:#555;">工日</div>
<div class="a txt" style="left:542px;top:303.30px;font-size:9.3px;color:#555;transform:scaleX(0.925);transform-origin:0 0;">171.89</div>
<div class="a txt" style="left:619.5px;top:303.35px;font-size:8.3px;color:#555;">--</div>
<div class="a txt" style="left:680.5px;top:303.35px;font-size:8.3px;color:#3a86f0;">暂无关联</div>
<div class="a txt" style="left:796.5px;top:303.35px;font-size:8.3px;color:#3a86f0;">信息价:</div>
<div class="a txt" style="left:829.5px;top:303.30px;font-size:9.3px;color:#3a86f0;transform:scaleX(0.925);transform-origin:0 0;">204.81</div>
<svg class="a" style="left:868px;top:302.2px" width="10" height="9" viewBox="0 0 10 9" fill="none" stroke="#5c9cf3" stroke-width="0.85" stroke-linecap="round" stroke-linejoin="round"><path d="M1.4 5.9 V8.2 M3.5 4.1 V8.2 M6.5 5 V8.2 M8.5 3.2 V8.2"/><path d="M0.9 4.1 L3.5 1.6 L5.4 3.1 L8.5 0.7"/></svg>
<div class="a txt" style="left:902px;top:303.35px;font-size:8.3px;color:#555;">信息价:</div>
<div class="a txt" style="left:935.6px;top:303.30px;font-size:9.3px;color:#f5424a;transform:scaleX(0.925);transform-origin:0 0;">19.15%</div>
<div class="a txt" style="left:1018px;top:303.35px;font-size:8.3px;color:#555;">信息价:</div>
<div class="a" style="left:1051px;top:307.7px;width:9px;height:0.8px;background:#d4d4d4"></div>
<div class="a" style="left:1062.5px;top:307.7px;width:9px;height:0.8px;background:#d4d4d4"></div>
<div class="a txt" style="left:1116px;top:303.35px;font-size:8.3px;color:#f98a25;">分析</div>
<div class="a txt" style="left:1139.6px;top:303.35px;font-size:8.3px;color:#3a86f0;">编辑</div>
<div class="a txt" style="left:1163.6px;top:303.35px;font-size:8.3px;color:#3a86f0;">附件</div>
<div class="a" style="left:155px;top:331.9px;width:9.7px;height:9.7px;border:1px solid #dfe2e7;border-radius:2px;background:#fff"></div>
<div class="a txt" style="left:183px;top:333.35px;font-size:8.3px;color:#555;">白水泥</div>
<div class="a txt" style="left:375px;top:333.35px;font-size:8.3px;color:#555;">品种 : 白色水泥</div>
<div class="a txt" style="left:490.8px;top:333.30px;font-size:9.3px;color:#555;transform:scaleX(0.925);transform-origin:0 0;">kg</div>
<div class="a txt" style="left:542px;top:333.30px;font-size:9.3px;color:#555;transform:scaleX(0.925);transform-origin:0 0;">0.758</div>
<div class="a txt" style="left:619.5px;top:333.35px;font-size:8.3px;color:#555;">--</div>
<div class="a txt" style="left:680.5px;top:333.35px;font-size:8.3px;color:#3a86f0;">市场价:</div>
<div class="a txt" style="left:714.5px;top:333.30px;font-size:9.3px;color:#3a86f0;transform:scaleX(0.925);transform-origin:0 0;">505</div>
<svg class="a" style="left:752.5px;top:332.2px" width="10" height="9" viewBox="0 0 10 9" fill="none" stroke="#5c9cf3" stroke-width="0.85" stroke-linecap="round" stroke-linejoin="round"><path d="M1.4 5.9 V8.2 M3.5 4.1 V8.2 M6.5 5 V8.2 M8.5 3.2 V8.2"/><path d="M0.9 4.1 L3.5 1.6 L5.4 3.1 L8.5 0.7"/></svg>
<div class="a txt" style="left:796.5px;top:333.35px;font-size:8.3px;color:#3a86f0;">信息价:</div>
<div class="a txt" style="left:829.5px;top:333.30px;font-size:9.3px;color:#3a86f0;transform:scaleX(0.925);transform-origin:0 0;">0.9</div>
<svg class="a" style="left:868px;top:332.2px" width="10" height="9" viewBox="0 0 10 9" fill="none" stroke="#5c9cf3" stroke-width="0.85" stroke-linecap="round" stroke-linejoin="round"><path d="M1.4 5.9 V8.2 M3.5 4.1 V8.2 M6.5 5 V8.2 M8.5 3.2 V8.2"/><path d="M0.9 4.1 L3.5 1.6 L5.4 3.1 L8.5 0.7"/></svg>
<div class="a txt" style="left:902px;top:329.05px;font-size:8.3px;color:#555;">市场价:</div>
<div class="a txt" style="left:935.6px;top:329.00px;font-size:9.3px;color:#f5424a;transform:scaleX(0.925);transform-origin:0 0;">66522.69%</div>
<div class="a txt" style="left:902px;top:337.85px;font-size:8.3px;color:#555;">信息价:</div>
<div class="a txt" style="left:935.6px;top:337.80px;font-size:9.3px;color:#f5424a;transform:scaleX(0.925);transform-origin:0 0;">18.73%</div>
<div class="a txt" style="left:1018px;top:329.05px;font-size:8.3px;color:#555;">市场价:</div>
<div class="a" style="left:1051px;top:333.4px;width:9px;height:0.8px;background:#d4d4d4"></div>
<div class="a" style="left:1062.5px;top:333.4px;width:9px;height:0.8px;background:#d4d4d4"></div>
<div class="a txt" style="left:1018px;top:337.85px;font-size:8.3px;color:#555;">信息价:</div>
<div class="a" style="left:1051px;top:342.2px;width:9px;height:0.8px;background:#d4d4d4"></div>
<div class="a" style="left:1062.5px;top:342.2px;width:9px;height:0.8px;background:#d4d4d4"></div>
<div class="a txt" style="left:1116px;top:333.35px;font-size:8.3px;color:#f98a25;">分析</div>
<div class="a txt" style="left:1139.6px;top:333.35px;font-size:8.3px;color:#3a86f0;">编辑</div>
<div class="a txt" style="left:1163.6px;top:333.35px;font-size:8.3px;color:#3a86f0;">附件</div>
<div class="a" style="left:155px;top:361.9px;width:9.7px;height:9.7px;border:1px solid #dfe2e7;border-radius:2px;background:#fff"></div>
<div class="a txt" style="left:183px;top:363.35px;font-size:8.3px;color:#555;">背压阀</div>
<div class="a txt" style="left:490.8px;top:363.35px;font-size:8.3px;color:#555;">个</div>
<div class="a txt" style="left:542px;top:363.30px;font-size:9.3px;color:#555;transform:scaleX(0.925);transform-origin:0 0;">350</div>
<div class="a txt" style="left:619.5px;top:363.35px;font-size:8.3px;color:#555;">--</div>
<div class="a txt" style="left:680.5px;top:363.35px;font-size:8.3px;color:#3a86f0;">暂无关联</div>
<div class="a txt" style="left:796.5px;top:363.35px;font-size:8.3px;color:#3a86f0;">信息价:</div>
<div class="a txt" style="left:829.5px;top:363.30px;font-size:9.3px;color:#3a86f0;transform:scaleX(0.925);transform-origin:0 0;">146.42</div>
<svg class="a" style="left:868px;top:362.2px" width="10" height="9" viewBox="0 0 10 9" fill="none" stroke="#5c9cf3" stroke-width="0.85" stroke-linecap="round" stroke-linejoin="round"><path d="M1.4 5.9 V8.2 M3.5 4.1 V8.2 M6.5 5 V8.2 M8.5 3.2 V8.2"/><path d="M0.9 4.1 L3.5 1.6 L5.4 3.1 L8.5 0.7"/></svg>
<div class="a txt" style="left:902px;top:363.35px;font-size:8.3px;color:#555;">信息价:</div>
<div class="a txt" style="left:935.6px;top:363.30px;font-size:9.3px;color:#2a9a3c;transform:scaleX(0.925);transform-origin:0 0;">-58.17%</div>
<div class="a txt" style="left:1018px;top:363.35px;font-size:8.3px;color:#555;">信息价:</div>
<div class="a" style="left:1051px;top:367.7px;width:9px;height:0.8px;background:#d4d4d4"></div>
<div class="a" style="left:1062.5px;top:367.7px;width:9px;height:0.8px;background:#d4d4d4"></div>
<div class="a txt" style="left:1116px;top:363.35px;font-size:8.3px;color:#f98a25;">分析</div>
<div class="a txt" style="left:1139.6px;top:363.35px;font-size:8.3px;color:#3a86f0;">编辑</div>
<div class="a txt" style="left:1163.6px;top:363.35px;font-size:8.3px;color:#3a86f0;">附件</div>
<div class="a" style="left:155px;top:391.9px;width:9.7px;height:9.7px;border:1px solid #dfe2e7;border-radius:2px;background:#fff"></div>
<div class="a txt" style="left:183px;top:393.35px;font-size:8.3px;color:#555;">泵送混凝土</div>
<div class="a txt" style="left:298px;top:393.35px;font-size:8.3px;color:#555;">(商品)<span style="font-size:9.1px;line-height:0">C30</span>,骨<span style="font-size:9.1px;line-height:0">...</span></div>
<div class="a txt" style="left:490.8px;top:393.30px;font-size:9.3px;color:#555;transform:scaleX(0.925);transform-origin:0 0;">m3</div>
<div class="a txt" style="left:542px;top:393.30px;font-size:9.3px;color:#555;transform:scaleX(0.925);transform-origin:0 0;">715.21</div>
<div class="a txt" style="left:619.5px;top:393.35px;font-size:8.3px;color:#555;">--</div>
<div class="a txt" style="left:680.5px;top:393.35px;font-size:8.3px;color:#3a86f0;">市场价:</div>
<div class="a txt" style="left:714.5px;top:393.30px;font-size:9.3px;color:#3a86f0;transform:scaleX(0.925);transform-origin:0 0;">610</div>
<svg class="a" style="left:752.5px;top:392.2px" width="10" height="9" viewBox="0 0 10 9" fill="none" stroke="#5c9cf3" stroke-width="0.85" stroke-linecap="round" stroke-linejoin="round"><path d="M1.4 5.9 V8.2 M3.5 4.1 V8.2 M6.5 5 V8.2 M8.5 3.2 V8.2"/><path d="M0.9 4.1 L3.5 1.6 L5.4 3.1 L8.5 0.7"/></svg>
<div class="a txt" style="left:796.5px;top:393.35px;font-size:8.3px;color:#3a86f0;">信息价:</div>
<div class="a" style="left:829px;top:397.2px;width:9px;height:0.8px;background:#3a86f0"></div>
<div class="a" style="left:841px;top:397.2px;width:9px;height:0.8px;background:#3a86f0"></div>
<svg class="a" style="left:868px;top:392.2px" width="10" height="9" viewBox="0 0 10 9" fill="none" stroke="#5c9cf3" stroke-width="0.85" stroke-linecap="round" stroke-linejoin="round"><path d="M1.4 5.9 V8.2 M3.5 4.1 V8.2 M6.5 5 V8.2 M8.5 3.2 V8.2"/><path d="M0.9 4.1 L3.5 1.6 L5.4 3.1 L8.5 0.7"/></svg>
<div class="a txt" style="left:902px;top:389.05px;font-size:8.3px;color:#555;">市场价:</div>
<div class="a txt" style="left:935.6px;top:389.00px;font-size:9.3px;color:#2a9a3c;transform:scaleX(0.925);transform-origin:0 0;">-14.71%</div>
<div class="a txt" style="left:902px;top:397.85px;font-size:8.3px;color:#555;">信息价:</div>
<div class="a" style="left:935.6px;top:402.2px;width:9px;height:0.8px;background:#d4d4d4"></div>
<div class="a" style="left:947.5px;top:402.2px;width:9px;height:0.8px;background:#d4d4d4"></div>
<div class="a txt" style="left:1018px;top:393.35px;font-size:8.3px;color:#555;">市场价:</div>
<div class="a" style="left:1051px;top:397.7px;width:9px;height:0.8px;background:#d4d4d4"></div>
<div class="a" style="left:1062.5px;top:397.7px;width:9px;height:0.8px;background:#d4d4d4"></div>
<div class="a txt" style="left:1116px;top:393.35px;font-size:8.3px;color:#f98a25;">分析</div>
<div class="a txt" style="left:1139.6px;top:393.35px;font-size:8.3px;color:#3a86f0;">编辑</div>
<div class="a txt" style="left:1163.6px;top:393.35px;font-size:8.3px;color:#3a86f0;">附件</div>
<div class="a" style="left:155px;top:421.55px;width:9.7px;height:9.7px;border:1px solid #dfe2e7;border-radius:2px;background:#fff"></div>
<div class="a txt" style="left:183px;top:423.00px;font-size:8.3px;color:#555;">不间<span style="font-size:9.1px;line-height:0">UPS</span>断电源</div>
<div class="a txt" style="left:298px;top:423.00px;font-size:8.3px;color:#555;"><span style="font-size:9.1px;line-height:0">3KVA</span>，<span style="font-size:9.1px;line-height:0">30min</span></div>
<div class="a txt" style="left:490.8px;top:423.00px;font-size:8.3px;color:#555;">台</div>
<div class="a txt" style="left:542px;top:422.95px;font-size:9.3px;color:#555;transform:scaleX(0.925);transform-origin:0 0;">1900</div>
<div class="a txt" style="left:619.5px;top:423.00px;font-size:8.3px;color:#555;">--</div>
<div class="a txt" style="left:680.5px;top:423.00px;font-size:8.3px;color:#3a86f0;">市场价:</div>
<div class="a txt" style="left:714.5px;top:422.95px;font-size:9.3px;color:#3a86f0;transform:scaleX(0.925);transform-origin:0 0;">5757</div>
<svg class="a" style="left:752.5px;top:421.85px" width="10" height="9" viewBox="0 0 10 9" fill="none" stroke="#5c9cf3" stroke-width="0.85" stroke-linecap="round" stroke-linejoin="round"><path d="M1.4 5.9 V8.2 M3.5 4.1 V8.2 M6.5 5 V8.2 M8.5 3.2 V8.2"/><path d="M0.9 4.1 L3.5 1.6 L5.4 3.1 L8.5 0.7"/></svg>
<div class="a txt" style="left:796.5px;top:423.00px;font-size:8.3px;color:#3a86f0;">暂无关联</div>
<div class="a txt" style="left:902px;top:423.00px;font-size:8.3px;color:#555;">市场价:</div>
<div class="a txt" style="left:935.6px;top:422.95px;font-size:9.3px;color:#f5424a;transform:scaleX(0.925);transform-origin:0 0;">203.00%</div>
<div class="a txt" style="left:1018px;top:423.00px;font-size:8.3px;color:#555;">市场价:</div>
<div class="a" style="left:1051px;top:427.35px;width:9px;height:0.8px;background:#d4d4d4"></div>
<div class="a" style="left:1062.5px;top:427.35px;width:9px;height:0.8px;background:#d4d4d4"></div>
<div class="a txt" style="left:1116px;top:423.00px;font-size:8.3px;color:#f98a25;">分析</div>
<div class="a txt" style="left:1139.6px;top:423.00px;font-size:8.3px;color:#3a86f0;">编辑</div>
<div class="a txt" style="left:1163.6px;top:423.00px;font-size:8.3px;color:#3a86f0;">附件</div>
<div class="a" style="left:155px;top:450.9px;width:9.7px;height:9.7px;border:1px solid #dfe2e7;border-radius:2px;background:#fff"></div>
<div class="a txt" style="left:183px;top:452.35px;font-size:8.3px;color:#555;">不锈钢扶手(直形)</div>
<div class="a txt" style="left:298px;top:452.35px;font-size:8.3px;color:#555;">Φ<span style="font-size:9.1px;line-height:0">60</span></div>
<div class="a txt" style="left:490.8px;top:452.30px;font-size:9.3px;color:#555;transform:scaleX(0.925);transform-origin:0 0;">m</div>
<div class="a txt" style="left:542px;top:452.30px;font-size:9.3px;color:#555;transform:scaleX(0.925);transform-origin:0 0;">24.1</div>
<div class="a txt" style="left:619.5px;top:452.35px;font-size:8.3px;color:#555;">--</div>
<div class="a txt" style="left:680.5px;top:452.35px;font-size:8.3px;color:#3a86f0;">市场价:</div>
<div class="a txt" style="left:714.5px;top:452.30px;font-size:9.3px;color:#3a86f0;transform:scaleX(0.925);transform-origin:0 0;">157</div>
<svg class="a" style="left:752.5px;top:451.2px" width="10" height="9" viewBox="0 0 10 9" fill="none" stroke="#5c9cf3" stroke-width="0.85" stroke-linecap="round" stroke-linejoin="round"><path d="M1.4 5.9 V8.2 M3.5 4.1 V8.2 M6.5 5 V8.2 M8.5 3.2 V8.2"/><path d="M0.9 4.1 L3.5 1.6 L5.4 3.1 L8.5 0.7"/></svg>
<div class="a txt" style="left:796.5px;top:452.35px;font-size:8.3px;color:#3a86f0;">信息价:</div>
<div class="a txt" style="left:829.5px;top:452.30px;font-size:9.3px;color:#3a86f0;transform:scaleX(0.925);transform-origin:0 0;">225.26</div>
<svg class="a" style="left:868px;top:451.2px" width="10" height="9" viewBox="0 0 10 9" fill="none" stroke="#5c9cf3" stroke-width="0.85" stroke-linecap="round" stroke-linejoin="round"><path d="M1.4 5.9 V8.2 M3.5 4.1 V8.2 M6.5 5 V8.2 M8.5 3.2 V8.2"/><path d="M0.9 4.1 L3.5 1.6 L5.4 3.1 L8.5 0.7"/></svg>
<div class="a txt" style="left:902px;top:448.05px;font-size:8.3px;color:#555;">市场价:</div>
<div class="a txt" style="left:935.6px;top:448.00px;font-size:9.3px;color:#f5424a;transform:scaleX(0.925);transform-origin:0 0;">551.45%</div>
<div class="a txt" style="left:902px;top:456.85px;font-size:8.3px;color:#555;">信息价:</div>
<div class="a txt" style="left:935.6px;top:456.80px;font-size:9.3px;color:#f5424a;transform:scaleX(0.925);transform-origin:0 0;">834.69%</div>
<div class="a txt" style="left:1018px;top:448.05px;font-size:8.3px;color:#555;">市场价:</div>
<div class="a" style="left:1051px;top:452.4px;width:9px;height:0.8px;background:#d4d4d4"></div>
<div class="a" style="left:1062.5px;top:452.4px;width:9px;height:0.8px;background:#d4d4d4"></div>
<div class="a txt" style="left:1018px;top:456.85px;font-size:8.3px;color:#555;">信息价:</div>
<div class="a" style="left:1051px;top:461.2px;width:9px;height:0.8px;background:#d4d4d4"></div>
<div class="a" style="left:1062.5px;top:461.2px;width:9px;height:0.8px;background:#d4d4d4"></div>
<div class="a txt" style="left:1116px;top:452.35px;font-size:8.3px;color:#f98a25;">分析</div>
<div class="a txt" style="left:1139.6px;top:452.35px;font-size:8.3px;color:#3a86f0;">编辑</div>
<div class="a txt" style="left:1163.6px;top:452.35px;font-size:8.3px;color:#3a86f0;">附件</div>
<div class="a" style="left:130px;top:35px;width:1px;height:440px;background:#f3f4f7"></div>
<div class="a" style="left:0;top:0;width:1px;height:475px;background:#eceef1"></div>
<div class="a" style="left:1192px;top:136px;width:8px;height:339px;background:#e9ecf0"></div></body></html>
